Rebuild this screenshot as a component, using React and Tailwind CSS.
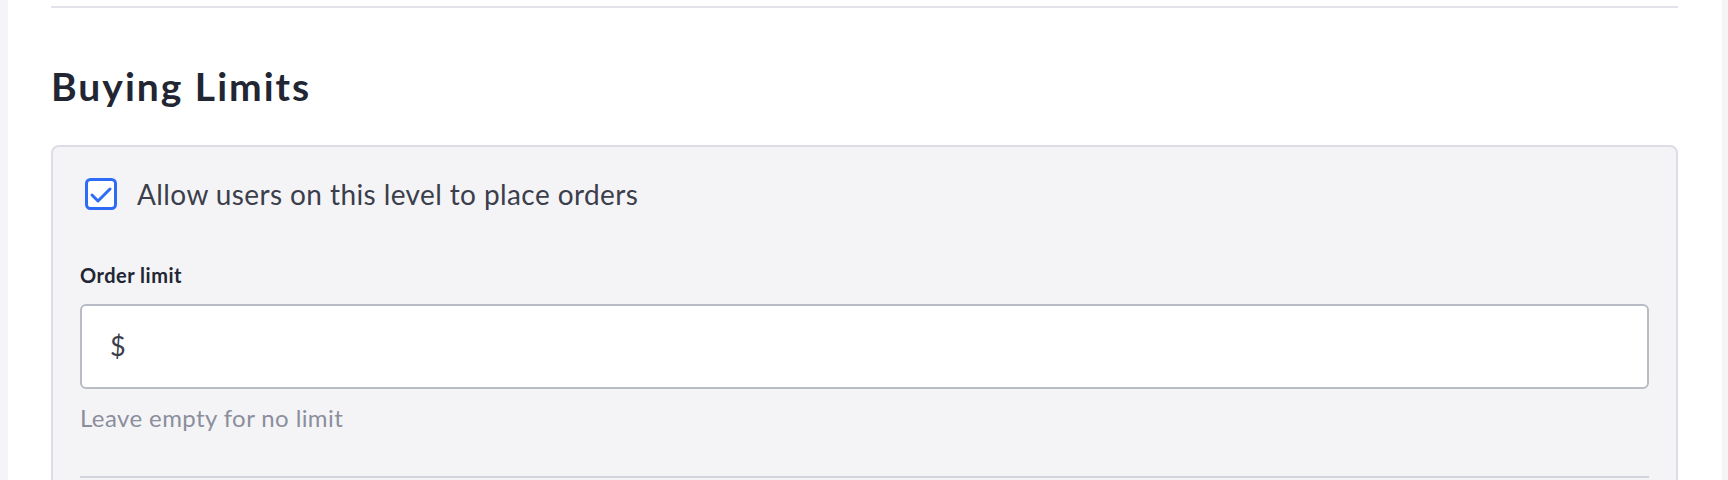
import React from "react";

export default function App() {
  return (
    <div className="flex min-h-[480px] bg-[#f5f5f8]" style={{ fontFamily: "Lato, 'Open Sans', sans-serif" }}>
      <div className="ml-2 mr-[6px] flex-1 bg-white pl-[43px] pr-[44px]">
        <div className="h-[6px]" />
        <div className="border-t-2 border-[#e1e2ea]" />
        <h2 className="mt-[56px] text-[39px] leading-[44px] font-bold tracking-[2px] text-[#222633]">Buying Limits</h2>
        <div className="mt-[37px] rounded-lg border-2 border-[#dcdde6] bg-[#f4f4f7] px-[27px] pt-[31px] pb-6">
          <label className="ml-[5px] flex items-center gap-5">
            <svg width="32" height="32" viewBox="0 0 32 32" className="shrink-0">
              <rect x="1.5" y="1.5" width="29" height="29" rx="4" fill="#ffffff" stroke="#2f6cf6" strokeWidth="3" />
              <polyline points="7,17 13,23 25,11" fill="none" stroke="#2f6cf6" strokeWidth="3" strokeLinecap="round" strokeLinejoin="round" />
            </svg>
            <span className="text-[28px] leading-[32px] tracking-[0.4px] text-[#3b3e4b]">Allow users on this level to place orders</span>
          </label>
          <div className="mt-[53px] text-[20px] leading-[24px] font-bold tracking-[0.5px] text-[#222633]">Order limit</div>
          <div className="mt-[17px] flex h-[85px] items-center rounded-md border-2 border-[#b9bbc7] bg-white px-[28px]">
            <span className="text-[27px] text-[#3b3e4b]">$</span>
          </div>
          <div className="mt-[15px] text-[24px] leading-[28px] tracking-[0.4px] text-[#8b8e9c]">Leave empty for no limit</div>
          <div className="mt-[44px] border-t-2 border-[#d3d5de]" />
        </div>
      </div>
    </div>
  );
}
